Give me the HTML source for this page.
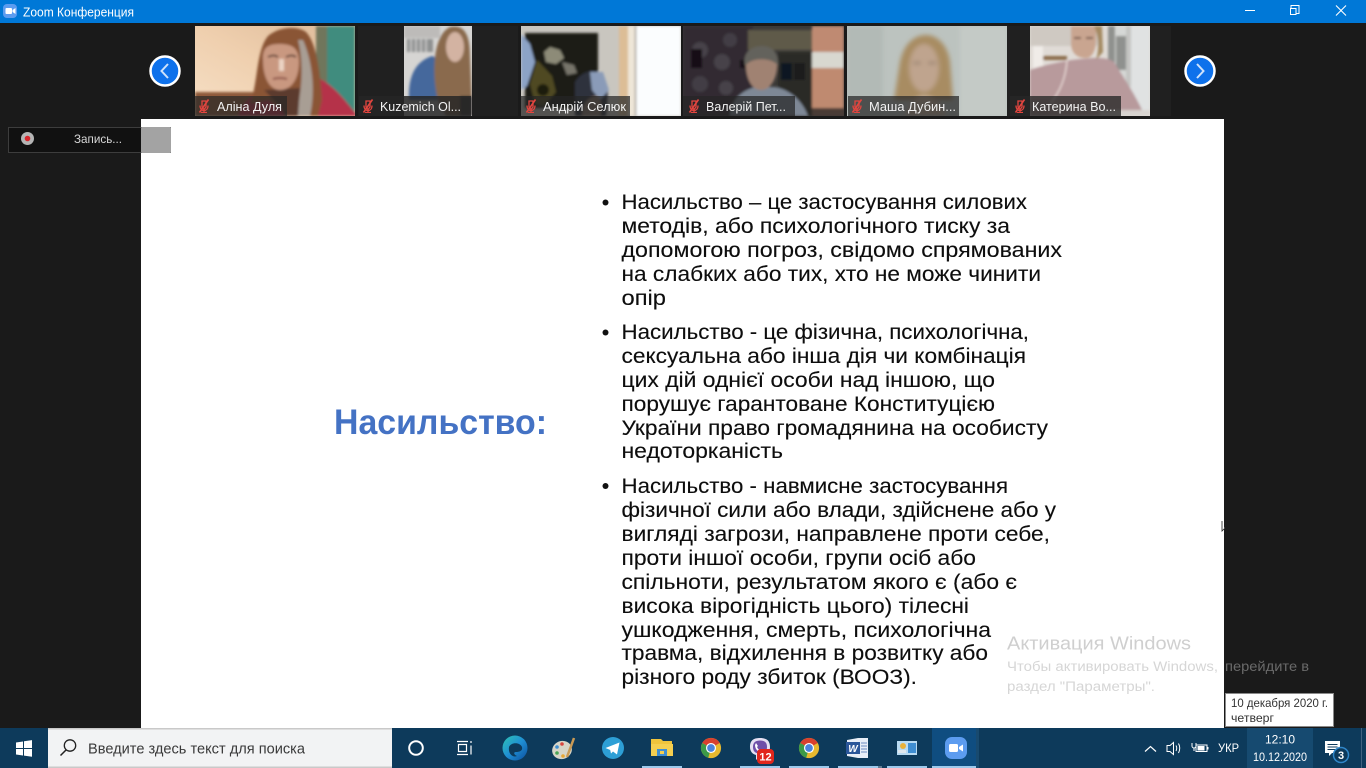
<!DOCTYPE html>
<html lang="uk">
<head>
<meta charset="utf-8">
<title>Zoom Конференция</title>
<style>
html,body{margin:0;padding:0;width:1366px;height:768px;overflow:hidden;background:#1a1a1a}
svg{display:block;position:absolute;left:0;top:0}
text{font-family:"Liberation Sans","DejaVu Sans",sans-serif}
.b{font-size:21.5px;fill:#0d0d0d;stroke:#0d0d0d;stroke-width:.12}
.n{font-size:13px;fill:#f2f2f2}
</style>
</head>
<body>
<svg width="1366" height="768" viewBox="0 0 1366 768" xmlns="http://www.w3.org/2000/svg">
<defs>
<filter id="b1" x="-20%" y="-20%" width="140%" height="140%"><feGaussianBlur stdDeviation="1.200"/></filter>
<filter id="b2" x="-20%" y="-20%" width="140%" height="140%"><feGaussianBlur stdDeviation="2.500"/></filter>
<filter id="b4" x="-20%" y="-20%" width="140%" height="140%"><feGaussianBlur stdDeviation="5"/></filter>
<clipPath id="c1"><rect x="195" y="26" width="160" height="90"/></clipPath>
<clipPath id="c2"><rect x="404" y="26" width="68" height="90"/></clipPath>
<clipPath id="c3"><rect x="521" y="26" width="160" height="90"/></clipPath>
<clipPath id="c4"><rect x="683" y="26" width="161" height="90"/></clipPath>
<clipPath id="c5"><rect x="847" y="26" width="160" height="90"/></clipPath>
<clipPath id="c6"><rect x="1030" y="26" width="120" height="90"/></clipPath>
<linearGradient id="w1" x1="0" y1="1" x2="1" y2="0"><stop offset="0" stop-color="#f6e0c6"/><stop offset=".5" stop-color="#efcfae"/><stop offset="1" stop-color="#dcb998"/></linearGradient>
<linearGradient id="edge" x1="0" y1="0" x2="1" y2="1"><stop offset="0" stop-color="#2fc4b2"/><stop offset=".5" stop-color="#1f8fd4"/><stop offset="1" stop-color="#0c4f9e"/></linearGradient>
<symbol id="mic" viewBox="0 0 14 14">
<path d="M5 2h4v6l-2 2.500-2-2.500zM3 6.500c0 3.500 2 5 4 5s4-1.500 4-5M7 11.500V13.500M4 13.500h6" fill="none" stroke="#e2453f" stroke-width="1.300"/>
<path d="M11.500 0.500L2.500 13.500" stroke="#e2453f" stroke-width="1.600"/>
</symbol>
<symbol id="chrome" viewBox="0 0 24 24">
<circle cx="12" cy="12" r="11" fill="#e7b92f"/>
<path d="M12 12L2.500 6.500A11 11 0 0 1 21.500 6.500Z" fill="#d8402f"/>
<path d="M12 12L2.500 6.500A11 11 0 0 0 9 22.600Z" fill="#3c9a48"/>
<circle cx="12" cy="12" r="5.500" fill="#fff"/><circle cx="12" cy="12" r="4.200" fill="#4b83dd"/>
</symbol>
</defs>

<!-- window background -->
<rect width="1366" height="768" fill="#1a1a1a"/>

<!-- title bar -->
<rect width="1366" height="23" fill="#0078d7"/>
<rect x="3" y="4" width="14" height="14" rx="4" fill="#5c9cf0"/>
<rect x="5.500" y="8" width="6.500" height="6" rx="1" fill="#fff"/>
<path d="M12.500 10l3-2v6l-3-2z" fill="#fff"/>
<text x="23" y="16.500" font-size="12.500" fill="#fff" textLength="111" lengthAdjust="spacingAndGlyphs">Zoom Конференция</text>
<path d="M1245 10.500h10" stroke="#fff" stroke-width="1"/>
<path d="M1291 8.500v-3h8v8h-3M1290.500 8.500h5.500v6h-5.500z" fill="none" stroke="#fff" stroke-width="1"/>
<path d="M1336 5.500l10 10M1346 5.500l-10 10" stroke="#fff" stroke-width="1.100"/>

<!-- strip -->
<rect x="358" y="26" width="160" height="90" fill="#202020"/>
<rect x="1007" y="26" width="164" height="90" fill="#202020"/>

<!-- video 1 -->
<g clip-path="url(#c1)">
<rect x="195" y="26" width="160" height="90" fill="url(#w1)"/>
<g filter="url(#b1)">
<rect x="327" y="26" width="28" height="90" fill="#3f8c7e"/>
<rect x="316" y="26" width="11" height="90" fill="#70765c"/>
<rect x="195" y="92" width="70" height="24" fill="#8e5a3a"/>
<path d="M238 116C244 98 256 92 270 90L312 76C330 80 345 100 356 114V116Z" fill="#b5304a"/>
<path d="M250 104C258 84 256 50 268 36C280 26 298 26 306 32C316 42 320 70 322 100L318 116H292L268 100Z" fill="#8a5434"/>
<path d="M303 40C312 60 316 90 310 116H296C302 90 304 64 298 40Z" fill="#a89e94"/>
<path d="M285 116C280 106 270 96 264 90L300 88L298 116Z" fill="#5c3a2e"/>
<path d="M263 60C262 46 270 44 280 44C292 44 299 48 299 62C299 78 292 90 280 90C270 90 263 78 263 60Z" fill="#c99880"/>
<path d="M268 57q6-3 10 0M286 57q6-3 10 0" stroke="#5a3d30" stroke-width="1.800" fill="none"/>
<path d="M273 79q7-2 14 0" stroke="#8e5548" stroke-width="2" fill="none"/>
<rect x="279" y="59" width="5" height="12" fill="#ecd4c4"/>
</g>
</g>

<!-- video 2 -->
<g clip-path="url(#c2)">
<rect x="404" y="26" width="68" height="90" fill="#d6d5d3"/>
<g filter="url(#b1)">
<rect x="404" y="26" width="36" height="12" fill="#bdbbb9"/>
<path d="M407 39h26v13h-26z" fill="#8f9191"/>
<path d="M411 39v13M416 39v13M421 39v13M426 39v13" stroke="#cfcfcf" stroke-width="1.500"/>
<path d="M409 100C408 78 414 62 432 56L446 62L444 100Z" fill="#45689c"/>
<path d="M438 100C432 76 432 36 450 27C464 24 470 34 470 56L472 104L462 116H446Z" fill="#8a6b4e"/>
<ellipse cx="455" cy="47" rx="9" ry="15" fill="#d3b3a2"/>
<path d="M460 96h12v20h-12z" fill="#3a3532"/>
</g>
</g>

<!-- video 3 -->
<g clip-path="url(#c3)">
<rect x="521" y="26" width="160" height="90" fill="#c9c6bf"/>
<g filter="url(#b1)">
<rect x="636" y="26" width="45" height="90" fill="#fbfdfe"/>
<rect x="627" y="26" width="9" height="90" fill="#efe6d8"/>
<rect x="634.500" y="26" width="2" height="90" fill="#b6b0a8"/>
<rect x="619" y="26" width="9" height="90" fill="#dcbd96"/>
<rect x="525" y="33" width="73" height="75" fill="#1a1c18"/>
<path d="M521 34L530 44L535 62L527 86L521 90Z" fill="#8ca3c6"/>
<path d="M544 52l6-5 10 3 4 8-8 6-10-2z" fill="#8d8b78"/>
<path d="M562 62l12 3 3 8-10 2z" fill="#77756a"/>
<path d="M537 60L552 76L556 92L544 106L535 104L530 84Z" fill="#4f4a22"/>
<circle cx="543" cy="90" r="6" fill="#1f1c10"/>
<path d="M575 116L575 82C582 70 596 68 604 76L608 92L606 116Z" fill="#2e333c"/>
<path d="M590 72L603 72L609 90L600 100L592 90Z" fill="#8a9bb8"/>
<path d="M582 116C582 102 590 96 598 96C602 100 602 110 600 116Z" fill="#8a786c"/>
</g>
</g>

<!-- video 4 -->
<g clip-path="url(#c4)">
<rect x="683" y="26" width="161" height="90" fill="#3c3a38"/>
<g filter="url(#b1)">
<rect x="683" y="26" width="70" height="90" fill="#312c33"/>
<circle cx="700" cy="50" r="8" fill="#47424a"/><circle cx="722" cy="62" r="8" fill="#47424a"/><circle cx="700" cy="84" r="8" fill="#423d45"/><circle cx="726" cy="88" r="7" fill="#47424a"/><circle cx="730" cy="40" r="7" fill="#423d45"/>
<rect x="691" y="49" width="11" height="19" fill="#121015"/>
<rect x="740" y="60" width="7" height="8" fill="#121015"/>
<rect x="748" y="30" width="64" height="20" fill="#5e5a4a"/>
<rect x="778" y="52" width="34" height="64" fill="#2c2a28"/>
<rect x="781" y="63" width="11" height="17" fill="#101820"/><rect x="794" y="63" width="11" height="17" fill="#1a1a1c"/>
<rect x="812" y="26" width="32" height="26" fill="#bf8a72"/>
<rect x="812" y="52" width="32" height="16" fill="#d8d8d0"/>
<rect x="812" y="68" width="32" height="40" fill="#bf8a70"/>
<rect x="812" y="108" width="32" height="8" fill="#4a3a36"/>
<path d="M730 116C732 96 745 90 755 87H775C790 90 802 100 808 116Z" fill="#7e8896"/>
<path d="M746 68C745 54 752 47 762 47C772 47 778 54 777 68C776 80 770 90 761 90C752 90 747 80 746 68Z" fill="#a08272"/>
<path d="M745 66C742 52 752 46 762 46C772 46 779 52 778 66C774 58 752 56 745 66Z" fill="#64625c"/>
</g>
</g>

<!-- video 5 -->
<g clip-path="url(#c5)">
<rect x="847" y="26" width="160" height="90" fill="#bcc3bf"/>
<g filter="url(#b2)">
<rect x="847" y="26" width="36" height="90" fill="#b2bab6"/>
<rect x="960" y="26" width="47" height="90" fill="#c4cac6"/>
<path d="M894 100L900 62C904 42 916 35 926 35C938 35 948 46 950 62L953 100Z" fill="#a88c62"/>
<ellipse cx="924" cy="68" rx="15" ry="24" fill="#bfa48e"/>
<path d="M905 116C910 102 916 96 924 96C934 96 942 104 946 116Z" fill="#cdb6a0"/>
<path d="M913 63h8M928 63h8" stroke="#8b7665" stroke-width="2"/>
</g>
</g>

<!-- video 6 -->
<g clip-path="url(#c6)">
<rect x="1030" y="26" width="120" height="90" fill="#e0dbd6"/>
<g filter="url(#b1)">
<rect x="1030" y="26" width="70" height="20" fill="#cfc9c2"/>
<rect x="1110" y="26" width="40" height="90" fill="#d6d8d6"/>
<path d="M1108 26h7v40h-7zM1116 36h12v34h-12z" fill="#8f918e"/>
<rect x="1126" y="26" width="5" height="60" fill="#c4c5c2"/>
<rect x="1131" y="26" width="19" height="90" fill="#e0e2e2"/>
<rect x="1033" y="46" width="10" height="24" fill="#f0ece8"/>
<rect x="1043" y="56" width="24" height="4" fill="#8a6a4a"/>
<path d="M1030 116V70C1040 66 1060 62 1072 60C1090 58 1106 56 1114 62C1124 78 1136 96 1143 112V116Z" fill="#b89a9c"/>
<path d="M1071 26L1071 44C1072 56 1080 58 1086 58C1092 58 1096 50 1096 40V26Z" fill="#c9a590"/>
<path d="M1094 26C1098 34 1100 48 1096 60L1103 52L1102 26Z" fill="#a48a62"/>
<path d="M1067 60C1066 78 1060 92 1050 104" stroke="#ebdcd8" stroke-width="1.300" fill="none"/>
<path d="M1074 38h7M1086 38h7" stroke="#6e5145" stroke-width="1.800"/>
<path d="M1030 116V100H1050V116Z" fill="#a88e8e"/>
<rect x="1100" y="110" width="50" height="6" fill="#d8d4d0"/>
</g>
</g>

<!-- name tags -->
<rect x="195" y="96" width="92" height="20" fill="#262626" opacity=".7"/>
<rect x="359" y="96" width="112" height="20" fill="#262626" opacity=".85"/>
<rect x="521" y="96" width="109" height="20" fill="#262626" opacity=".72"/>
<rect x="683" y="96" width="112" height="20" fill="#262626" opacity=".72"/>
<rect x="848" y="96" width="111" height="20" fill="#262626" opacity=".72"/>
<rect x="1010" y="96" width="111" height="20" fill="#262626" opacity=".78"/>
<use href="#mic" x="197" y="99" width="14" height="14"/>
<use href="#mic" x="361" y="99" width="14" height="14"/>
<use href="#mic" x="524" y="99" width="14" height="14"/>
<use href="#mic" x="687" y="99" width="14" height="14"/>
<use href="#mic" x="850" y="99" width="14" height="14"/>
<use href="#mic" x="1013" y="99" width="14" height="14"/>
<text class="n" x="217" y="111" textLength="65" lengthAdjust="spacingAndGlyphs">Аліна Дуля</text>
<text class="n" x="380" y="111" textLength="81" lengthAdjust="spacingAndGlyphs">Kuzemich Ol...</text>
<text class="n" x="543" y="111" textLength="83" lengthAdjust="spacingAndGlyphs">Андрій Селюк</text>
<text class="n" x="706" y="111" textLength="80" lengthAdjust="spacingAndGlyphs">Валерій Пет...</text>
<text class="n" x="869" y="111" textLength="87" lengthAdjust="spacingAndGlyphs">Маша Дубин...</text>
<text class="n" x="1032" y="111" textLength="84" lengthAdjust="spacingAndGlyphs">Катерина Во...</text>

<!-- arrows -->
<circle cx="165" cy="71" r="14.500" fill="#0e71eb" stroke="#fff" stroke-width="2.500"/>
<path d="M168 64l-6.500 7 6.500 7" fill="none" stroke="#cfe2fb" stroke-width="2"/>
<circle cx="1200" cy="71" r="14.500" fill="#0e71eb" stroke="#fff" stroke-width="2.500"/>
<path d="M1197 64l6.500 7-6.500 7" fill="none" stroke="#cfe2fb" stroke-width="2"/>

<!-- slide -->
<rect x="141" y="119" width="1083" height="609" fill="#fff"/>

<!-- recording pill -->
<rect x="8.500" y="127.500" width="162" height="25" fill="#111" stroke="#3d3d3d"/>
<rect x="141" y="127" width="30" height="26" rx="1" fill="#a3a3a3"/>
<circle cx="27.500" cy="138.500" r="6.500" fill="#b5b5b5"/>
<circle cx="27.500" cy="138.500" r="2.800" fill="#d9262c"/>
<text x="74" y="143" font-size="12" fill="#d8d8d8" textLength="48" lengthAdjust="spacingAndGlyphs">Запись...</text>

<!-- slide text -->
<text x="334" y="434" font-size="35" font-weight="700" fill="#4472c4" textLength="213" lengthAdjust="spacingAndGlyphs">Насильство:</text>

<circle cx="605.500" cy="202.500" r="3" fill="#111"/>
<circle cx="605.500" cy="332.500" r="3" fill="#111"/>
<circle cx="605.500" cy="486" r="3" fill="#111"/>
<g class="txt">
<text class="b" x="621.500" y="209" textLength="405.500" lengthAdjust="spacingAndGlyphs">Насильство – це застосування силових</text>
<text class="b" x="621.500" y="233" textLength="388.500" lengthAdjust="spacingAndGlyphs">методів, або психологічного тиску за</text>
<text class="b" x="621.500" y="257" textLength="440.500" lengthAdjust="spacingAndGlyphs">допомогою погроз, свідомо спрямованих</text>
<text class="b" x="621.500" y="281" textLength="419.500" lengthAdjust="spacingAndGlyphs">на слабких або тих, хто не може чинити</text>
<text class="b" x="621.500" y="305" textLength="44.500" lengthAdjust="spacingAndGlyphs">опір</text>
<text class="b" x="621.500" y="339" textLength="407.500" lengthAdjust="spacingAndGlyphs">Насильство - це фізична, психологічна,</text>
<text class="b" x="621.500" y="363" textLength="404.500" lengthAdjust="spacingAndGlyphs">сексуальна або інша дія чи комбінація</text>
<text class="b" x="621.500" y="387" textLength="373.500" lengthAdjust="spacingAndGlyphs">цих дій однієї особи над іншою, що</text>
<text class="b" x="621.500" y="411" textLength="373.500" lengthAdjust="spacingAndGlyphs">порушує гарантоване Конституцією</text>
<text class="b" x="621.500" y="435" textLength="426.500" lengthAdjust="spacingAndGlyphs">України право громадянина на особисту</text>
<text class="b" x="621.500" y="458" textLength="161.500" lengthAdjust="spacingAndGlyphs">недоторканість</text>
<text class="b" x="621.500" y="493" textLength="386.500" lengthAdjust="spacingAndGlyphs">Насильство - навмисне застосування</text>
<text class="b" x="621.500" y="517" textLength="434.500" lengthAdjust="spacingAndGlyphs">фізичної сили або влади, здійснене або у</text>
<text class="b" x="621.500" y="541" textLength="428.500" lengthAdjust="spacingAndGlyphs">вигляді загрози, направлене проти себе,</text>
<text class="b" x="621.500" y="565" textLength="354.500" lengthAdjust="spacingAndGlyphs">проти іншої особи, групи осіб або</text>
<text class="b" x="621.500" y="589" textLength="395.500" lengthAdjust="spacingAndGlyphs">спільноти, результатом якого є (або є</text>
<text class="b" x="621.500" y="613" textLength="347.500" lengthAdjust="spacingAndGlyphs">висока вірогідність цього) тілесні</text>
<text class="b" x="621.500" y="637" textLength="369.500" lengthAdjust="spacingAndGlyphs">ушкодження, смерть, психологічна</text>
<text class="b" x="621.500" y="660" textLength="366.500" lengthAdjust="spacingAndGlyphs">травма, відхилення в розвитку або</text>
<text class="b" x="621.500" y="684" textLength="295.500" lengthAdjust="spacingAndGlyphs">різного роду збиток (ВООЗ).</text>
</g>

<!-- cursor -->
<path d="M1222 521v10l2.500-2.500" fill="#fff" stroke="#222" stroke-width=".8"/>

<!-- activation watermark -->
<text x="1007" y="649.500" font-size="18" fill="#cfcfcf" textLength="184" lengthAdjust="spacingAndGlyphs">Активация Windows</text>
<text x="1007" y="671" font-size="13.500" fill="#d6d6d6" textLength="211" lengthAdjust="spacingAndGlyphs">Чтобы активировать Windows,</text>
<text x="1225" y="671" font-size="13.500" fill="#6a6a6a" textLength="84" lengthAdjust="spacingAndGlyphs">перейдите в</text>
<text x="1007" y="691" font-size="13.500" fill="#d6d6d6" textLength="148" lengthAdjust="spacingAndGlyphs">раздел "Параметры".</text>

<!-- taskbar -->
<rect x="0" y="728" width="1366" height="40" fill="#0d3a5b"/>
<g fill="#fff">
<path d="M16 742.500l7-1v6.500h-7zM24 741.300l8-1.200V748h-8zM16 749h7v6.500l-7-1zM24 749h8v7.800l-8-1.200z"/>
</g>
<rect x="48" y="728" width="344" height="40" fill="#f2f3f4"/>
<rect x="48" y="728" width="344" height="1.500" fill="#c9c9c9"/>
<rect x="48" y="766.500" width="344" height="1.500" fill="#c9c9c9"/>
<circle cx="70" cy="745.500" r="5.700" fill="none" stroke="#222" stroke-width="1.300"/>
<path d="M66 750l-5.500 5.500" stroke="#222" stroke-width="1.500"/>
<text x="88" y="753.500" font-size="14.500" fill="#3a3a3a" textLength="217" lengthAdjust="spacingAndGlyphs">Введите здесь текст для поиска</text>

<circle cx="416" cy="748" r="6.800" fill="none" stroke="#fff" stroke-width="2"/>
<g fill="none" stroke="#fff" stroke-width="1.200">
<path d="M457 741.500h11M457 754.500h11M458.500 744.500h8v7h-8zM471 741v2M471 745.500v9"/>
</g>

<!-- edge -->
<circle cx="515" cy="748" r="12.500" fill="url(#edge)"/>
<path d="M509 747c2-5 11-5 13 0c1 4-3 5-6 5c-3 0-2 3 1 4c-5 2-9-3-8-9z" fill="#0d3a5b"/>
<!-- paint -->
<ellipse cx="562" cy="750" rx="10" ry="9" fill="#d7d5c8" transform="rotate(-20 562 750)"/>
<circle cx="557" cy="747" r="1.800" fill="#3e8ed0"/><circle cx="562" cy="744" r="1.800" fill="#d8463f"/><circle cx="557" cy="753" r="1.800" fill="#49a455"/><circle cx="563" cy="756" r="1.800" fill="#e6a635"/>
<path d="M574 738l-7 19" stroke="#c99a55" stroke-width="2.500"/>
<!-- telegram -->
<circle cx="613" cy="748" r="11" fill="#2d9fd6"/>
<path d="M605.500 748l14-5.500-2.500 12-4-3-2 2-.8-3.500z" fill="#fff"/>
<!-- explorer -->
<path d="M651 739h10l2 2h9v3h-21z" fill="#f0c43c"/>
<rect x="651" y="744" width="22" height="12" fill="#f5cf50"/>
<rect x="657" y="749" width="10" height="7" fill="#3f8ed2"/>
<rect x="660" y="751" width="4" height="3" fill="#f5cf50"/>
<rect x="642" y="766" width="40" height="2" fill="#9cc9ec"/>
<!-- chrome -->
<use href="#chrome" x="700" y="737" width="22" height="22"/>
<!-- viber -->
<path d="M750 747c0-7 4-9 10-9s10 2 10 9-4 9-10 9l-4 4v-5c-4-1-6-4-6-8z" fill="#e6dff2"/>
<path d="M753 747c0-5 3-6.500 7-6.500s7 1.500 7 6.500-3 6.500-7 6.500-7-1.500-7-6.500z" fill="#6f4fa8"/>
<path d="M756 743l2 3-1 1c1 2 2 3 4 4l1-1 3 2c-3 3-10-1-10-7z" fill="#fff"/>
<rect x="757" y="749" width="17" height="15" rx="4" fill="#e1261c"/>
<text x="765.500" y="760.500" font-size="11" font-weight="700" fill="#fff" text-anchor="middle">12</text>
<rect x="740" y="766" width="40" height="2" fill="#9cc9ec"/>
<!-- chrome 2 -->
<use href="#chrome" x="798" y="737" width="22" height="22"/>
<rect x="789" y="766" width="40" height="2" fill="#9cc9ec"/>
<!-- word -->
<path d="M847 740l11-2h10v20l-10 0-11-2z" fill="#e8eef7"/>
<rect x="846" y="742" width="14" height="12" fill="#2a5699"/>
<text x="853" y="752" font-size="10" font-weight="700" fill="#fff" text-anchor="middle" font-style="italic">W</text>
<path d="M861 743h6M861 746h6M861 749h6M861 752h6" stroke="#6b8cc0" stroke-width="1"/>
<rect x="838" y="766" width="40" height="2" fill="#9cc9ec"/>
<rect x="878" y="766" width="4" height="2" fill="#5f7c93"/>
<!-- app -->
<rect x="897" y="741" width="20" height="14" fill="#b8dbf3"/>
<circle cx="903" cy="746" r="3" fill="#e8b13a"/>
<rect x="908" y="743" width="8" height="10" fill="#3f8ed2"/>
<rect x="898" y="750" width="8" height="3" fill="#e0e8ef"/>
<rect x="887" y="766" width="40" height="2" fill="#9cc9ec"/>
<!-- zoom active -->
<rect x="932" y="728" width="44" height="40" fill="#0f4d80"/>
<rect x="945" y="737" width="22" height="22" rx="7" fill="#5c9cf0"/>
<rect x="949" y="744" width="9" height="8" rx="1.500" fill="#fff"/>
<path d="M959 747l4-2.500v7l-4-2.500z" fill="#fff"/>
<rect x="932" y="766" width="44" height="2" fill="#9cc9ec"/>
<rect x="976" y="728" width="3" height="40" fill="#184a6f"/>

<!-- tray -->
<path d="M1145 751.500l5.500-5 5.500 5" fill="none" stroke="#fff" stroke-width="1.200"/>
<path d="M1167 745.500h3l3.500-3v12l-3.500-3h-3z" fill="none" stroke="#fff" stroke-width="1"/>
<path d="M1176 745.500q1.500 2.500 0 5.500M1178.500 743.500q2.500 4.500 0 9.500" fill="none" stroke="#fff" stroke-width="1"/>
<rect x="1196" y="745" width="11" height="6.500" fill="none" stroke="#fff" stroke-width="1"/>
<rect x="1197.500" y="746" width="7" height="4.500" fill="#fff"/>
<rect x="1207" y="747" width="1.500" height="2.500" fill="#fff"/>
<path d="M1192 743v3a2 2 0 0 0 4 0v-3M1194 748v3" fill="none" stroke="#fff" stroke-width="1"/>
<text x="1218" y="752" font-size="12" fill="#fff" textLength="21" lengthAdjust="spacingAndGlyphs">УКР</text>
<rect x="1247" y="728" width="66" height="40" fill="#164a70"/>
<text x="1280" y="743.500" font-size="12" fill="#fff" text-anchor="middle">12:10</text>
<text x="1280" y="761" font-size="12" fill="#fff" text-anchor="middle" textLength="54" lengthAdjust="spacingAndGlyphs">10.12.2020</text>
<path d="M1325 741h15v12h-8l-3 3v-3h-4z" fill="#fff"/>
<path d="M1327.500 744.500h10M1327.500 747h10M1327.500 749.500h10" stroke="#0d3a5b" stroke-width="1"/>
<circle cx="1341" cy="755" r="7.500" fill="#0d3a5b" stroke="#2f86c9" stroke-width="1.500"/>
<text x="1341" y="759" font-size="11" font-weight="700" fill="#fff" text-anchor="middle">3</text>
<rect x="1361" y="728" width="1" height="40" fill="#3f6280"/>

<!-- date tooltip -->
<rect x="1225.500" y="693.500" width="108" height="33" fill="#fff" stroke="#8a8a8a"/>
<text x="1231" y="707" font-size="12" fill="#333" textLength="97" lengthAdjust="spacingAndGlyphs">10 декабря 2020 г.</text>
<text x="1231" y="722" font-size="12" fill="#333" textLength="43" lengthAdjust="spacingAndGlyphs">четверг</text>
</svg>
</body>
</html>
